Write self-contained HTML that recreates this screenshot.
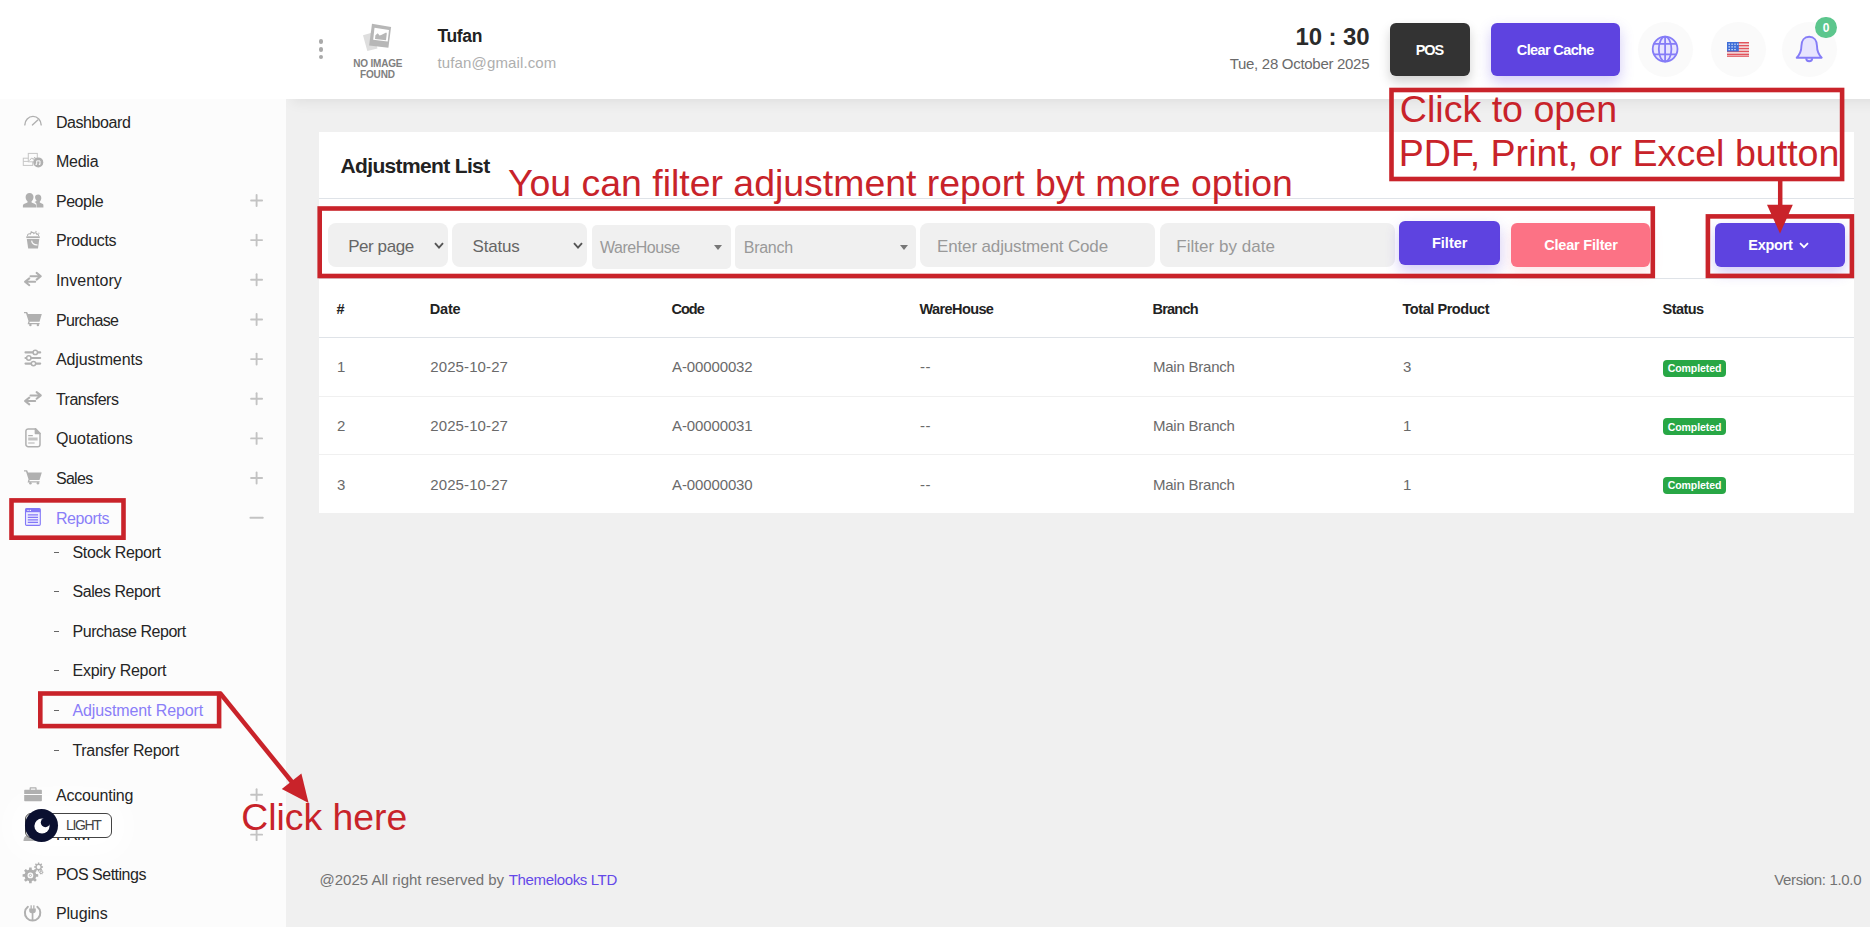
<!DOCTYPE html>
<html lang="en"><head><meta charset="utf-8"><title>Adjustment Report</title>
<style>
html,body{margin:0;padding:0}
body{width:1870px;height:927px;overflow:hidden;position:relative;background:#f0f0f0;font-family:"Liberation Sans", sans-serif}
.t{position:absolute;white-space:pre;line-height:1;font-family:"Liberation Sans", sans-serif}
svg{position:absolute;overflow:visible}
.ann{font-family:"Liberation Sans", sans-serif;font-size:37.33px;fill:#c8232a}
</style></head><body>
<div class="bg">
<div style="position:absolute;left:0px;top:0px;width:286px;height:927px;background:#fcfcfc"></div>
<div style="position:absolute;left:286px;top:99px;width:1584px;height:40px;overflow:hidden"><div style="position:absolute;left:6px;top:-30px;width:1600px;height:30px;box-shadow:0 3px 14px rgba(0,0,0,.075)"></div></div>
<div style="position:absolute;left:286px;top:0px;width:1584px;height:99px;background:#fff"></div>
<div style="position:absolute;left:0px;top:0px;width:286px;height:99px;background:#fff"></div>
<div style="position:absolute;left:319px;top:132px;width:1535px;height:381px;background:#fff"></div>
<div style="position:absolute;left:319px;top:198px;width:1535px;height:1px;background:#dfe3e8"></div>
<div style="position:absolute;left:319px;top:278px;width:1535px;height:1px;background:#dfe3e8"></div>
<div style="position:absolute;left:319px;top:337px;width:1535px;height:1px;background:#dfe3e8"></div>
<div style="position:absolute;left:319px;top:396px;width:1535px;height:1px;background:#f0f0f0"></div>
<div style="position:absolute;left:319px;top:454px;width:1535px;height:1px;background:#f0f0f0"></div>
</div>
<header>
<div style="position:absolute;left:318.7px;top:39.300000000000004px;width:4.6px;height:4.6px;border-radius:50%;background:#a9a9a9"></div>
<div style="position:absolute;left:318.7px;top:47.0px;width:4.6px;height:4.6px;border-radius:50%;background:#a9a9a9"></div>
<div style="position:absolute;left:318.7px;top:54.7px;width:4.6px;height:4.6px;border-radius:50%;background:#a9a9a9"></div>
<span class="t" style="left:437.50px;top:28.00px;font-size:17.5px;font-weight:700;color:#222;letter-spacing:-0.369px;">Tufan</span>
<span class="t" style="left:437.50px;top:55.00px;font-size:15px;font-weight:400;color:#aeaeae;letter-spacing:0.136px;">tufan@gmail.com</span>
<span class="t" style="left:353.30px;top:59.00px;font-size:10px;font-weight:700;color:#808080;letter-spacing:-0.195px;">NO IMAGE</span>
<span class="t" style="left:360.10px;top:70.00px;font-size:10px;font-weight:700;color:#808080;letter-spacing:-0.192px;">FOUND</span>
<span class="t" style="left:1295.40px;top:25.00px;font-size:24.0px;font-weight:700;color:#2b2b2b;letter-spacing:-0.103px;">10 : 30</span>
<span class="t" style="left:1229.71px;top:56.00px;font-size:15px;font-weight:400;color:#6a6a6a;letter-spacing:-0.294px;">Tue, 28 October 2025</span>
<div style="position:absolute;left:1390px;top:23px;width:80px;height:53px;background:#333;border-radius:6px;box-shadow:0 6px 12px rgba(0,0,0,.18)"></div>
<span class="t" style="left:1415.73px;top:43.00px;font-size:14.5px;font-weight:700;color:#fff;letter-spacing:-1.042px;">POS</span>
<div style="position:absolute;left:1491px;top:23px;width:129px;height:53px;background:#5e43e0;border-radius:6px;box-shadow:0 6px 14px rgba(94,67,224,.28)"></div>
<span class="t" style="left:1516.79px;top:43.00px;font-size:14.5px;font-weight:700;color:#fff;letter-spacing:-0.621px;">Clear Cache</span>
<div style="position:absolute;left:1638.0px;top:21.799999999999997px;width:55px;height:55px;border-radius:50%;background:#fafafa"></div>
<div style="position:absolute;left:1711.0px;top:21.799999999999997px;width:55px;height:55px;border-radius:50%;background:#fafafa"></div>
<div style="position:absolute;left:1782.2px;top:21.799999999999997px;width:55px;height:55px;border-radius:50%;background:#fafafa"></div>
<div style="position:absolute;left:1815.2px;top:16.9px;width:21.6px;height:21.6px;border-radius:50%;background:#5cc68d"></div>
<span class="t" style="left:1822.66px;top:22.00px;font-size:12px;font-weight:700;color:#fff;letter-spacing:0.548px;">0</span>
<svg style="left:0;top:0" width="1870" height="99" viewBox="0 0 1870 99">
<!-- no image -->
<polygon points="363,35.200 372.500,32.500 377.500,48.600 367.300,51" fill="#dedede"/>
<polygon points="372,23.700 391.100,27 388.400,47.800 369.100,45.600" fill="#b7b7b7"/>
<polygon points="374.500,27.800 389,30.100 387.700,41.400 373.200,39.800" fill="#fff"/>
<polygon points="375,39 375.400,35.200 377.800,33.200 379.500,35.400 381.200,35 386.200,32.500 386.800,33.400 386,40.300" fill="#b7b7b7"/>
<!-- globe -->
<g fill="none" stroke="#857cf7" stroke-width="1.800"><circle cx="1665.100" cy="49.100" r="12.400" fill="#e7e4fe"/><ellipse cx="1665.100" cy="49.100" rx="6.300" ry="12.400"/><path d="M1665.100 36.500V61.700M1653.700 43.800H1676.500M1653.700 54.400H1676.500"/></g>
<!-- flag -->
<g><rect x="1727" y="42" width="22" height="14.800" fill="#f4f0f0"/>
<g fill="#e2545c"><rect x="1727" y="42" width="22" height="1.500"/><rect x="1727" y="44.900" width="22" height="1.500"/><rect x="1727" y="47.800" width="22" height="1.500"/><rect x="1727" y="50.700" width="22" height="1.500"/><rect x="1727" y="53.600" width="22" height="1.500"/><rect x="1727" y="55.600" width="22" height="1.200"/></g>
<rect x="1727" y="42" width="11.800" height="9.500" fill="#3f6fd8"/>
<g fill="#dfe8fb"><rect x="1728.500" y="43.600" width="1.400" height="1.200"/><rect x="1731.400" y="43.600" width="1.400" height="1.200"/><rect x="1734.300" y="43.600" width="1.400" height="1.200"/><rect x="1737" y="43.600" width="1.200" height="1.200"/><rect x="1728.500" y="46.300" width="1.400" height="1.200"/><rect x="1731.400" y="46.300" width="1.400" height="1.200"/><rect x="1734.300" y="46.300" width="1.400" height="1.200"/><rect x="1728.500" y="49" width="1.400" height="1.200"/><rect x="1731.400" y="49" width="1.400" height="1.200"/><rect x="1734.300" y="49" width="1.400" height="1.200"/></g></g>
<!-- bell -->
<g fill="#e7e4fe" stroke="#857cf7" stroke-width="1.900" stroke-linejoin="round"><path d="M1806.200 58.200a3 3 0 0 0 6 0"/><path d="M1796.700 57.700c3.300-3.300 4.700-6.400 4.700-11.600 0-5.600 3-9.300 7.800-9.300s7.800 3.700 7.800 9.300c0 5.200 1.400 8.300 4.700 11.600Z"/></g>
</svg>
</header>
<aside>
<div style="position:absolute;left:30px;top:816px;width:76px;height:20px;border-radius:10px;background:#fff;box-shadow:0 0 26px 22px rgba(255,255,255,.9)"></div>
<svg style="left:0;top:0" width="286" height="927" viewBox="0 0 286 927">
<!-- dashboard -->
<g fill="none" stroke="#b0b0b0" stroke-width="1.4" stroke-linecap="round"><path d="M24.8 124.9A8.2 8.5 0 0 1 41.2 124.9"/><path d="M32.4 124.9L37.8 120"/></g>
<!-- media -->
<g fill="none" stroke="#c6c6c6" stroke-width="1"><rect x="23.3" y="158.200" width="9.400" height="7.200"/><rect x="28.300" y="153.400" width="9" height="8.400" fill="#fcfcfc"/><path d="M29.500 160.500l2.200-2.600 1.600 1.600 1.400-2.400 1.600 3.400" stroke="#bcbcbc"/><path d="M23.300 161.400h5"/></g>
<circle cx="38.300" cy="162.400" r="5" fill="#b0b0b0"/><path d="M36.700 164.200v-3.300h3.300v3.300" fill="none" stroke="#fcfcfc" stroke-width="1"/><circle cx="36.200" cy="164.300" r=".8" fill="#fcfcfc"/><circle cx="39.500" cy="164.300" r=".8" fill="#fcfcfc"/>
<!-- people -->
<g fill="#b0b0b0"><path d="M38.2 194.6c2 0 3.1 1.5 3.1 3.4 0 1.5-.7 2.9-1.5 3.6v.9l3 1.4c.5.3.6.7.6 1.3v2.4H36.5v-3.2c0-.9-.4-1.5-1.1-1.9l-.9-.5 2-.9v-.6c-.9-.8-1.4-2-1.4-3.4 0-1.5 1.1-2.5 3.1-2.5Z"/>
<path d="M29.6 193c2.5 0 3.9 1.8 3.9 4 0 1.800-.8 3.500-1.900 4.300v1.100l3.500 1.600c.7.300 1 .9 1 1.600v2H22.900v-2c0-.700.300-1.300 1-1.600l3.600-1.600v-1.100c-1.100-.8-1.900-2.500-1.900-4.300 0-2.200 1.500-4 4-4Z"/></g>
<!-- products bucket -->
<path d="M26.3 236.300H39.800V238.100H26.300Z" fill="#b0b0b0"/><path d="M26.800 239H39.300L38 248.500H28.200Z" fill="#b0b0b0"/>
<g fill="none" stroke="#b0b0b0" stroke-width="1.1"><path d="M27.600 236c-.4-1.700 1.300-2.700 2.600-1.900.3-2 3-2.400 3.700-.6 1-1.200 2.900-.7 3 .8 1-.5 2 .5 1.600 1.700"/><path d="M30.900 232.300l.6-1M35.700 232.100l.6-1.100M38.500 233.500l.8-.7"/></g>
<path d="M31.600 240.600c.5 2.800 2.800 4.500 5.900 4.300" fill="none" stroke="#fcfcfc" stroke-width="1.200"/>
<g transform="translate(0,0)" fill="none" stroke="#b0b0b0" stroke-width="2" stroke-linecap="round" stroke-linejoin="round">
<path d="M30.5 276.2H40.6M36.6 272.9L40.8 276.2L36.6 279.6"/>
<path d="M35.2 281.8H25.2M29.3 278.4L25 281.8L29.3 285.2"/></g>
<g transform="translate(0,0)">
<path d="M24 311.9h3.1l1 2.2H41.8l-2.3 7.6H29.6l-0.2 1.2H39.6v1.3H27.6l0.9-3.2L26 313.3H24Z" fill="#b0b0b0"/>
<circle cx="30.4" cy="325" r="1.25" fill="#b0b0b0"/><circle cx="37.9" cy="325" r="1.25" fill="#b0b0b0"/></g>
<!-- adjustments sliders -->
<g stroke="#b0b0b0" stroke-width="2.1" stroke-linecap="round"><path d="M25.5 352.4H40.2M25.5 358H40.2M25.5 363.6H40.2"/></g>
<g fill="#fcfcfc" stroke="#b0b0b0" stroke-width="1.5"><circle cx="35.3" cy="352.4" r="2.2"/><circle cx="28.8" cy="358" r="2.2"/><circle cx="33.5" cy="363.6" r="2.2"/></g>
<g transform="translate(0,119.2)" fill="none" stroke="#b0b0b0" stroke-width="2" stroke-linecap="round" stroke-linejoin="round">
<path d="M30.5 276.2H40.6M36.6 272.9L40.8 276.2L36.6 279.6"/>
<path d="M35.2 281.8H25.2M29.3 278.4L25 281.8L29.3 285.2"/></g>
<!-- quotations doc -->
<g fill="none" stroke="#b0b0b0" stroke-width="1.5" stroke-linejoin="round"><path d="M28.2 428.9h7.200l4.600 4.600v10.900a2.300 2.300 0 0 1-2.300 2.300H28.200a2.300 2.300 0 0 1-2.300-2.300V431.200a2.300 2.300 0 0 1 2.300-2.300Z"/><path d="M35.400 428.900v4.600h4.600Z" fill="#b0b0b0"/></g>
<g stroke="#b0b0b0"><path d="M28.2 435.600h4.600M28.200 443h6.400" stroke-width="1.1"/><path d="M28.200 439h9.400" stroke-width="3" stroke-dasharray="0" opacity=".75"/></g>
<g transform="translate(0,158.3)">
<path d="M24 311.9h3.1l1 2.2H41.8l-2.3 7.6H29.6l-0.2 1.2H39.6v1.3H27.6l0.9-3.2L26 313.3H24Z" fill="#b0b0b0"/>
<circle cx="30.4" cy="325" r="1.25" fill="#b0b0b0"/><circle cx="37.9" cy="325" r="1.25" fill="#b0b0b0"/></g>
<!-- reports -->
<g><rect x="25.500" y="508.600" width="14.800" height="16.800" rx="1.200" fill="#ecebff" stroke="#8378f7" stroke-width="1.100"/><rect x="25.500" y="508.600" width="14.800" height="3.600" fill="#8378f7"/><circle cx="28" cy="510.400" r=".7" fill="#fff"/><circle cx="30.300" cy="510.400" r=".7" fill="#fff"/>
<path d="M27.800 514.800h10.200M27.800 517.300h10.200M27.800 519.800h10.200M27.800 522.300h10.200" stroke="#8378f7" stroke-width="1.200"/></g>
<!-- accounting briefcase -->
<g fill="#b0b0b0"><path d="M29.600 790v-1.700c0-.6.400-1 1-1h5c.6 0 1 .4 1 1V790h-1.200v-1.500h-4.600V790Z"/><path d="M25.200 789.800H40.900c.6 0 1 .4 1 1v3.300H24.200v-3.300c0-.6.400-1 1-1Z"/><path d="M24.200 795.100H41.900v5.100c0 .6-.4 1-1 1H25.200c-.6 0-1-.4-1-1Z"/></g>
<!-- hrm (mostly hidden) -->
<g fill="#b0b0b0"><circle cx="30" cy="829.500" r="3.200"/><path d="M23.500 841c0-4 2.800-6.400 6.500-6.400s6.500 2.400 6.500 6.400Z"/></g>
<!-- pos settings gears -->
<path d="M36.12 873.97L38.20 874.16L38.20 876.64L36.12 876.83L35.46 878.43L36.79 880.04L35.04 881.79L33.43 880.46L31.83 881.12L31.64 883.20L29.16 883.20L28.97 881.12L27.37 880.46L25.76 881.79L24.01 880.04L25.34 878.43L24.68 876.83L22.60 876.64L22.60 874.16L24.68 873.97L25.34 872.37L24.01 870.76L25.76 869.01L27.37 870.34L28.97 869.68L29.16 867.60L31.64 867.60L31.83 869.68L33.43 870.34L35.04 869.01L36.79 870.76L35.46 872.37ZM33.30 875.40A2.9 2.9 0 1 0 27.50 875.40A2.9 2.9 0 1 0 33.30 875.40Z" fill="#b0b0b0" fill-rule="evenodd"/><circle cx="30.4" cy="875.4" r="1.1" fill="none" stroke="#b0b0b0" stroke-width=".8"/>
<path d="M41.80 866.20L43.04 866.30L43.04 867.70L41.80 867.80L41.43 868.70L42.24 869.65L41.25 870.64L40.30 869.83L39.40 870.20L39.30 871.44L37.90 871.44L37.80 870.20L36.90 869.83L35.95 870.64L34.96 869.65L35.77 868.70L35.40 867.80L34.16 867.70L34.16 866.30L35.40 866.20L35.77 865.30L34.96 864.35L35.95 863.36L36.90 864.17L37.80 863.80L37.90 862.56L39.30 862.56L39.40 863.80L40.30 864.17L41.25 863.36L42.24 864.35L41.43 865.30ZM40.50 867.00A1.9 1.9 0 1 0 36.70 867.00A1.9 1.9 0 1 0 40.50 867.00Z" fill="#b0b0b0" fill-rule="evenodd"/><path d="M42.72 871.79L43.45 871.82L43.45 872.78L42.72 872.81L42.40 873.35L42.74 874.01L41.91 874.49L41.51 873.87L40.89 873.87L40.49 874.49L39.66 874.01L40.00 873.35L39.68 872.81L38.95 872.78L38.95 871.82L39.68 871.79L40.00 871.25L39.66 870.59L40.49 870.11L40.89 870.73L41.51 870.73L41.91 870.11L42.74 870.59L42.40 871.25ZM42.00 872.30A0.8 0.8 0 1 0 40.40 872.30A0.8 0.8 0 1 0 42.00 872.30Z" fill="#b0b0b0" fill-rule="evenodd"/>
<!-- plugins -->
<g fill="none" stroke="#b0b0b0" stroke-width="2" stroke-linecap="round"><path d="M27.9 906.8A7.7 7.7 0 1 0 37.3 906.8"/></g>
<g fill="#b0b0b0"><rect x="30.5" y="905.3" width="1.3" height="3.6"/><rect x="33.2" y="905.3" width="1.3" height="3.6"/><path d="M29.2 908.5h6.600v2.200c0 1.300-.9 2.300-2.400 2.500v7h-1.700v-7c-1.500-.2-2.500-1.200-2.500-2.500Z"/></g>
</svg>
<span class="t" style="left:55.90px;top:115.00px;font-size:16px;font-weight:400;color:#252525;letter-spacing:-0.414px;">Dashboard</span>
<span class="t" style="left:55.90px;top:154.00px;font-size:16px;font-weight:400;color:#252525;letter-spacing:-0.224px;">Media</span>
<span class="t" style="left:55.90px;top:194.00px;font-size:16px;font-weight:400;color:#252525;letter-spacing:-0.424px;">People</span>
<span class="t" style="left:55.90px;top:233.00px;font-size:16px;font-weight:400;color:#252525;letter-spacing:-0.368px;">Products</span>
<span class="t" style="left:55.90px;top:273.00px;font-size:16px;font-weight:400;color:#252525;letter-spacing:0.003px;">Inventory</span>
<span class="t" style="left:55.90px;top:313.00px;font-size:16px;font-weight:400;color:#252525;letter-spacing:-0.644px;">Purchase</span>
<span class="t" style="left:55.90px;top:352.00px;font-size:16px;font-weight:400;color:#252525;letter-spacing:-0.117px;">Adjustments</span>
<span class="t" style="left:55.90px;top:392.00px;font-size:16px;font-weight:400;color:#252525;letter-spacing:-0.496px;">Transfers</span>
<span class="t" style="left:55.90px;top:431.00px;font-size:16px;font-weight:400;color:#252525;letter-spacing:-0.060px;">Quotations</span>
<span class="t" style="left:55.90px;top:471.00px;font-size:16px;font-weight:400;color:#252525;letter-spacing:-0.669px;">Sales</span>
<span class="t" style="left:55.90px;top:511.00px;font-size:16px;font-weight:400;color:#8a7ef8;letter-spacing:-0.398px;">Reports</span>
<span class="t" style="left:72.50px;top:545.00px;font-size:16px;font-weight:400;color:#252525;letter-spacing:-0.359px;">Stock Report</span>
<div style="position:absolute;left:54px;top:551.6px;width:5px;height:1.2px;background:#666"></div>
<span class="t" style="left:72.50px;top:584.00px;font-size:16px;font-weight:400;color:#252525;letter-spacing:-0.424px;">Sales Report</span>
<div style="position:absolute;left:54px;top:590.6px;width:5px;height:1.2px;background:#666"></div>
<span class="t" style="left:72.50px;top:624.00px;font-size:16px;font-weight:400;color:#252525;letter-spacing:-0.459px;">Purchase Report</span>
<div style="position:absolute;left:54px;top:630.6px;width:5px;height:1.2px;background:#666"></div>
<span class="t" style="left:72.50px;top:663.00px;font-size:16px;font-weight:400;color:#252525;letter-spacing:-0.252px;">Expiry Report</span>
<div style="position:absolute;left:54px;top:669.6px;width:5px;height:1.2px;background:#666"></div>
<span class="t" style="left:72.50px;top:703.00px;font-size:16px;font-weight:400;color:#8a7ef8;letter-spacing:-0.111px;">Adjustment Report</span>
<div style="position:absolute;left:54px;top:709.6px;width:5px;height:1.2px;background:#666"></div>
<span class="t" style="left:72.50px;top:743.00px;font-size:16px;font-weight:400;color:#252525;letter-spacing:-0.338px;">Transfer Report</span>
<div style="position:absolute;left:54px;top:749.6px;width:5px;height:1.2px;background:#666"></div>
<span class="t" style="left:55.90px;top:788.00px;font-size:16px;font-weight:400;color:#252525;letter-spacing:-0.180px;">Accounting</span>
<span class="t" style="left:55.90px;top:827.00px;font-size:16px;font-weight:400;color:#252525;letter-spacing:-0.947px;">HRM</span>
<span class="t" style="left:55.90px;top:867.00px;font-size:16px;font-weight:400;color:#252525;letter-spacing:-0.504px;">POS Settings</span>
<span class="t" style="left:55.90px;top:906.00px;font-size:16px;font-weight:400;color:#252525;letter-spacing:-0.123px;">Plugins</span>
<svg style="left:0;top:0" width="286" height="927" viewBox="0 0 286 927"><g fill="none" stroke="#c3c3c3" stroke-width="1.9" stroke-linecap="round"><path d="M251.1 200.45H262.1"/><path d="M256.6 194.95V205.95"/><path d="M251.1 240.11H262.1"/><path d="M256.6 234.61V245.61"/><path d="M251.1 279.77H262.1"/><path d="M256.6 274.27V285.27"/><path d="M251.1 319.43H262.1"/><path d="M256.6 313.93V324.93"/><path d="M251.1 359.09H262.1"/><path d="M256.6 353.59V364.59"/><path d="M251.1 398.75H262.1"/><path d="M256.6 393.25V404.25"/><path d="M251.1 438.41H262.1"/><path d="M256.6 432.91V443.91"/><path d="M251.1 478.07H262.1"/><path d="M256.6 472.57V483.57"/><path d="M250.4 517.75H262.8"/><path d="M251.1 794.75H262.1"/><path d="M256.6 789.25V800.25"/><path d="M251.1 834.65H262.1"/><path d="M256.6 829.15V840.15"/></g></svg>
<div style="position:absolute;left:24.5px;top:813.2px;width:85.1px;height:23.2px;background:#fff;border:1px solid #444;border-radius:6px"></div>
<div style="position:absolute;left:25.0px;top:809.0px;width:32.8px;height:32.8px;border-radius:50%;background:#0b1030"></div>
<svg style="left:31.5px;top:815.5px" width="20" height="20" viewBox="0 0 20 20"><circle cx="10" cy="10" r="7.6" fill="#fff"/><circle cx="13.4" cy="6.6" r="4.6" fill="#0b1030"/></svg>
<span class="t" style="left:66.00px;top:818.00px;font-size:14px;font-weight:400;color:#444;letter-spacing:-1.327px;">LIGHT</span>
</aside>
<main>
<span class="t" style="left:340.50px;top:155.00px;font-size:21.0px;font-weight:700;color:#222;letter-spacing:-0.645px;">Adjustment List</span>
<div style="position:absolute;left:328px;top:223px;width:120px;height:44px;background:#f0f0f0;border-radius:8px;"></div>
<span class="t" style="left:348.20px;top:238.00px;font-size:17px;font-weight:400;color:#666;letter-spacing:-0.438px;">Per page</span>
<div style="position:absolute;left:452px;top:223px;width:135px;height:44px;background:#f0f0f0;border-radius:8px;"></div>
<span class="t" style="left:472.50px;top:238.00px;font-size:17px;font-weight:400;color:#666;letter-spacing:-0.201px;">Status</span>
<svg style="left:434px;top:241.5px" width="10" height="8" viewBox="0 0 10 8"><path d="M1 1.2 L5 5.6 L9 1.2" fill="none" stroke="#555" stroke-width="1.9"/></svg>
<svg style="left:573px;top:241.5px" width="10" height="8" viewBox="0 0 10 8"><path d="M1 1.2 L5 5.6 L9 1.2" fill="none" stroke="#555" stroke-width="1.9"/></svg>
<div style="position:absolute;left:592px;top:225px;width:139px;height:44px;background:#f0f0f0;border-radius:5px;"></div>
<span class="t" style="left:600.10px;top:240.00px;font-size:16px;font-weight:400;color:#999;letter-spacing:-0.488px;">WareHouse</span>
<div style="position:absolute;left:735px;top:225px;width:181px;height:44px;background:#f0f0f0;border-radius:5px;"></div>
<span class="t" style="left:743.80px;top:240.00px;font-size:16px;font-weight:400;color:#999;letter-spacing:-0.284px;">Branch</span>
<svg style="left:714.2px;top:245px" width="8" height="5" viewBox="0 0 8 5"><path d="M0 0H8L4 5Z" fill="#777"/></svg>
<svg style="left:900px;top:245px" width="8" height="5" viewBox="0 0 8 5"><path d="M0 0H8L4 5Z" fill="#777"/></svg>
<div style="position:absolute;left:920.3px;top:223px;width:235px;height:44px;background:#f0f0f0;border-radius:8px;"></div>
<span class="t" style="left:937.00px;top:238.00px;font-size:17px;font-weight:400;color:#999;letter-spacing:-0.138px;">Enter adjustment Code</span>
<div style="position:absolute;left:1160.3px;top:223px;width:234.5px;height:44px;background:#f0f0f0;border-radius:8px;"></div>
<span class="t" style="left:1176.30px;top:238.00px;font-size:17px;font-weight:400;color:#999;letter-spacing:0.038px;">Filter by date</span>
<div style="position:absolute;left:1399px;top:221px;width:101px;height:44px;background:#5e43e0;border-radius:6px;box-shadow:0 6px 14px rgba(94,67,224,.28)"></div>
<span class="t" style="left:1431.95px;top:236.00px;font-size:14.5px;font-weight:700;color:#fff;letter-spacing:0.008px;">Filter</span>
<div style="position:absolute;left:1511px;top:223px;width:139px;height:44px;background:#fc7285;border-radius:6px;box-shadow:0 6px 14px rgba(252,114,133,.18)"></div>
<span class="t" style="left:1544.16px;top:238.00px;font-size:14.5px;font-weight:700;color:#fff;letter-spacing:-0.188px;">Clear Filter</span>
<div style="position:absolute;left:1715px;top:223px;width:130px;height:44px;background:#5e43e0;border-radius:6px;box-shadow:0 6px 14px rgba(94,67,224,.28)"></div>
<span class="t" style="left:1748.30px;top:238.00px;font-size:14.5px;font-weight:700;color:#fff;letter-spacing:-0.270px;">Export</span>
<svg style="left:1798.8px;top:241.6px" width="10" height="7" viewBox="0 0 10 7"><path d="M1 1.2 L5 5.2 L9 1.2" fill="none" stroke="#fff" stroke-width="1.8"/></svg>
<span class="t" style="left:336.50px;top:302.00px;font-size:14.5px;font-weight:700;color:#222;letter-spacing:0.608px;">#</span>
<span class="t" style="left:429.80px;top:302.00px;font-size:14.5px;font-weight:700;color:#222;letter-spacing:-0.225px;">Date</span>
<span class="t" style="left:671.50px;top:302.00px;font-size:14.5px;font-weight:700;color:#222;letter-spacing:-1.002px;">Code</span>
<span class="t" style="left:919.50px;top:302.00px;font-size:14.5px;font-weight:700;color:#222;letter-spacing:-0.600px;">WareHouse</span>
<span class="t" style="left:1152.50px;top:302.00px;font-size:14.5px;font-weight:700;color:#222;letter-spacing:-0.776px;">Branch</span>
<span class="t" style="left:1402.50px;top:302.00px;font-size:14.5px;font-weight:700;color:#222;letter-spacing:-0.445px;">Total Product</span>
<span class="t" style="left:1662.50px;top:302.00px;font-size:14.5px;font-weight:700;color:#222;letter-spacing:-0.543px;">Status</span>
<span class="t" style="left:337.00px;top:359.00px;font-size:15px;font-weight:400;color:#6a6a6a;letter-spacing:0.008px;">1</span>
<span class="t" style="left:430.30px;top:359.00px;font-size:15px;font-weight:400;color:#6a6a6a;letter-spacing:0.099px;">2025-10-27</span>
<span class="t" style="left:672.00px;top:359.00px;font-size:15px;font-weight:400;color:#6a6a6a;letter-spacing:-0.119px;">A-00000032</span>
<span class="t" style="left:920.00px;top:359.00px;font-size:15px;font-weight:400;color:#6a6a6a;letter-spacing:0.514px;">--</span>
<span class="t" style="left:1153.00px;top:359.00px;font-size:15px;font-weight:400;color:#6a6a6a;letter-spacing:-0.237px;">Main Branch</span>
<span class="t" style="left:1403.00px;top:359.00px;font-size:15px;font-weight:400;color:#6a6a6a;letter-spacing:0.008px;">3</span>
<div style="position:absolute;left:1663px;top:359.8px;width:63.1px;height:17.2px;background:#28a745;border-radius:4px;"></div>
<span class="t" style="left:1667.81px;top:363.00px;font-size:10.5px;font-weight:700;color:#fff;letter-spacing:-0.085px;">Completed</span>
<span class="t" style="left:337.00px;top:418.00px;font-size:15px;font-weight:400;color:#6a6a6a;letter-spacing:0.008px;">2</span>
<span class="t" style="left:430.30px;top:418.00px;font-size:15px;font-weight:400;color:#6a6a6a;letter-spacing:0.099px;">2025-10-27</span>
<span class="t" style="left:672.00px;top:418.00px;font-size:15px;font-weight:400;color:#6a6a6a;letter-spacing:-0.119px;">A-00000031</span>
<span class="t" style="left:920.00px;top:418.00px;font-size:15px;font-weight:400;color:#6a6a6a;letter-spacing:0.514px;">--</span>
<span class="t" style="left:1153.00px;top:418.00px;font-size:15px;font-weight:400;color:#6a6a6a;letter-spacing:-0.237px;">Main Branch</span>
<span class="t" style="left:1403.00px;top:418.00px;font-size:15px;font-weight:400;color:#6a6a6a;letter-spacing:0.008px;">1</span>
<div style="position:absolute;left:1663px;top:418.2px;width:63.1px;height:17.2px;background:#28a745;border-radius:4px;"></div>
<span class="t" style="left:1667.81px;top:422.00px;font-size:10.5px;font-weight:700;color:#fff;letter-spacing:-0.085px;">Completed</span>
<span class="t" style="left:337.00px;top:477.00px;font-size:15px;font-weight:400;color:#6a6a6a;letter-spacing:0.008px;">3</span>
<span class="t" style="left:430.30px;top:477.00px;font-size:15px;font-weight:400;color:#6a6a6a;letter-spacing:0.099px;">2025-10-27</span>
<span class="t" style="left:672.00px;top:477.00px;font-size:15px;font-weight:400;color:#6a6a6a;letter-spacing:-0.119px;">A-00000030</span>
<span class="t" style="left:920.00px;top:477.00px;font-size:15px;font-weight:400;color:#6a6a6a;letter-spacing:0.514px;">--</span>
<span class="t" style="left:1153.00px;top:477.00px;font-size:15px;font-weight:400;color:#6a6a6a;letter-spacing:-0.237px;">Main Branch</span>
<span class="t" style="left:1403.00px;top:477.00px;font-size:15px;font-weight:400;color:#6a6a6a;letter-spacing:0.008px;">1</span>
<div style="position:absolute;left:1663px;top:477.1px;width:63.1px;height:17.2px;background:#28a745;border-radius:4px;"></div>
<span class="t" style="left:1667.81px;top:480.00px;font-size:10.5px;font-weight:700;color:#fff;letter-spacing:-0.085px;">Completed</span>
</main>
<footer>
<span class="t" style="left:319.50px;top:872.00px;font-size:15px;font-weight:400;color:#737373;letter-spacing:0.004px;">@2025 All right reserved by </span>
<span class="t" style="left:508.80px;top:872.00px;font-size:15px;font-weight:400;color:#6448e8;letter-spacing:-0.356px;">Themelooks LTD</span>
<span class="t" style="left:1774.26px;top:872.00px;font-size:15px;font-weight:400;color:#737373;letter-spacing:-0.346px;">Version: 1.0.0</span>
</footer>
<div class="annotations">
<svg style="left:0;top:0" width="1870" height="927" viewBox="0 0 1870 927">
<rect x="11.50" y="500.40" width="112.00" height="37.30" fill="none" stroke="#c9232a" stroke-width="4.6"/><rect x="40.30" y="693.50" width="178.80" height="32.60" fill="none" stroke="#c9232a" stroke-width="4.6"/><rect x="319.70" y="208.50" width="1333.10" height="67.50" fill="none" stroke="#c9232a" stroke-width="4.6"/><rect x="1391.50" y="90.00" width="450.60" height="89.00" fill="none" stroke="#c9232a" stroke-width="4.6"/><rect x="1707.90" y="216.40" width="144.00" height="59.50" fill="none" stroke="#c9232a" stroke-width="4.6"/>
<line x1="220" y1="693" x2="296" y2="787" stroke="#c9232a" stroke-width="4.5"/>
<polygon points="308.6,803.1 301.4,773.5 281.8,789.1" fill="#c9232a"/>
<line x1="1780.2" y1="181" x2="1780.2" y2="210" stroke="#c9232a" stroke-width="4.5"/>
<polygon points="1767,204.7 1792.8,204.7 1780,233.6" fill="#c9232a"/>
<text class="ann" style="font-size:37.6px" x="1399.8" y="122">Click to open</text>
<text class="ann" style="font-size:37.6px" x="1398.7" y="166">PDF, Print, or Excel button</text>
<text class="ann" style="font-size:37.43px" x="508" y="196">You can filter adjustment report byt more option</text>
<text class="ann" x="241.3" y="830">Click here</text>
</svg>
</div>
</body></html>
